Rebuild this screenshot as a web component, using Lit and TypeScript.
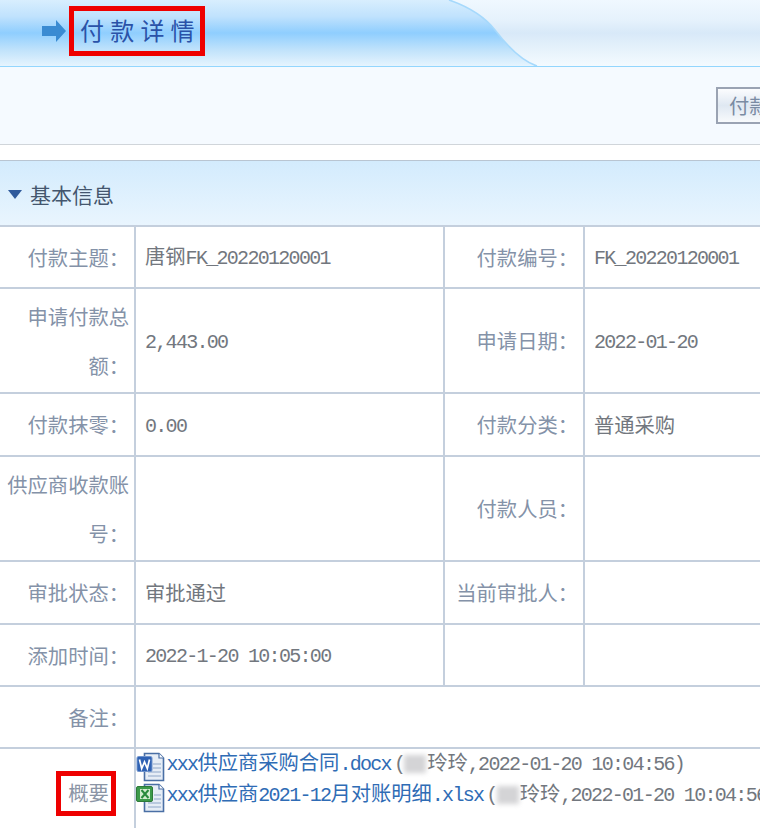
import { LitElement, html, css, svg } from "lit";
import { customElement } from "lit/decorators.js";

const t = (s: string) =>
  s.split(/([\x20-\x7e]+)/).map((p, i) => (i % 2 ? html`<span class="m">${p}</span>` : p));

const wordIcon = html`<svg class="ficon" width="29" height="30" viewBox="0 0 29 30">
  <path d="M8.5 1.5H23L27.5 6V28.5H8.5Z" fill="#e6edf6" stroke="#4a6fa5" stroke-width="1.6"/>
  <path d="M23 1.5V6H27.5" fill="#fff" stroke="#4a6fa5" stroke-width="1.2"/>
  <path d="M17 12H25M17 16H25M12 20H25M12 24H25" stroke="#8ea6c8" stroke-width="1"/>
  <rect x="1" y="4.5" width="15" height="15" rx="1.5" fill="#2f62b4" stroke="#6f93cc"/>
  <path d="M3.5 7.5L5.7 16.5L8.5 10L11.3 16.5L13.5 7.5" fill="none" stroke="#fff" stroke-width="1.7"/>
</svg>`;

const excelIcon = html`<svg class="ficon" width="29" height="30" viewBox="0 0 29 30">
  <path d="M8.5 1.5H23L27.5 6V28.5H8.5Z" fill="#e6edf6" stroke="#4a6fa5" stroke-width="1.6"/>
  <path d="M23 1.5V6H27.5" fill="#fff" stroke="#4a6fa5" stroke-width="1.2"/>
  <path d="M18 12H25M18 16H25M12 20H25M12 24H25" stroke="#8ea6c8" stroke-width="1"/>
  <rect x="0.5" y="3.5" width="16" height="15" rx="1.5" fill="#3c9a4a" stroke="#2d7a3a"/>
  <rect x="4" y="6" width="10" height="10" fill="#d5ecd0"/>
  <path d="M5.5 7L12.5 15M12.5 7L5.5 15" stroke="#2a8a3c" stroke-width="2"/>
</svg>`;

const curve = svg`
  <defs>
    <linearGradient id="hg" x1="0" y1="0" x2="0" y2="1">
      <stop offset="0" stop-color="#d8eefe"/>
      <stop offset="0.25" stop-color="#c0e2fd"/>
      <stop offset="0.5" stop-color="#8fcefe"/>
      <stop offset="0.75" stop-color="#bfe2fb"/>
      <stop offset="1" stop-color="#e6f4fe"/>
    </linearGradient>
  </defs>
  <path d="M0 0H449C475 9 488 21 495 30C508 47 522 61 537 66H0Z" fill="url(#hg)"/>
  <path d="M449 0C475 9 488 21 495 30C508 47 522 61 537 66" fill="none" stroke="#a6d9fc" stroke-width="1.6"/>`;

@customElement("app-root")
export class AppRoot extends LitElement {
  static styles = css`
    :host {
      display: block;
      width: 760px;
      height: 828px;
      overflow: hidden;
      background: #fff;
      font-family: "Noto Sans CJK SC", "Liberation Sans", sans-serif;
      font-size: 20.3px;
      font-weight: 400;
    }
    .m {
      font-family: "Liberation Mono", monospace;
      font-size: 20px;
      letter-spacing: -1.7px;
    }
    .header {
      position: relative;
      height: 66px;
      border-bottom: 1.5px solid #93d6fe;
      display: flex;
      align-items: center;
      background: linear-gradient(#f0f8ff, #e6f2fc 30%, #d8e9f8 50%, #e6f2fb 75%, #f4faff);
    }
    .curve { position: absolute; left: 0; top: 0; }
    .arrow { position: relative; margin-left: 42px; margin-right: 3px; margin-top: -4px; }
    .title {
      position: relative;
      box-sizing: border-box;
      width: 136px;
      height: 50px;
      border: 5px solid #ee0000;
      display: flex;
      align-items: center;
      padding-left: 6px;
      padding-bottom: 3px;
      margin-top: -4px;
      font-size: 24px;
      letter-spacing: 6.2px;
      color: #2a52a8;
      white-space: nowrap;
    }
    .toolbar {
      height: 78px;
      box-sizing: border-box;
      background: #f5faff;
      border-bottom: 1.5px solid #d0d5da;
      display: flex;
      justify-content: flex-end;
      padding-top: 20px;
    }
    .btn {
      box-sizing: border-box;
      width: 44px;
      height: 37px;
      border: 2px solid #9aa3b3;
      border-right: none;
      background: linear-gradient(#fbfcfe, #dfe8f2 50%, #f8fafc);
      color: #7a8ba3;
      padding-left: 11px;
      line-height: 33px;
      white-space: nowrap;
      overflow: hidden;
    }
    .spacer { height: 15px; }
    .section {
      height: 65px;
      box-sizing: border-box;
      border-top: 1.5px solid #b9c5d2;
      background: linear-gradient(#d3ebfd, #e9f5fe);
      display: flex;
      align-items: center;
      gap: 8px;
      padding: 2px 0 0 8px;
      font-size: 21px;
      color: #44566e;
    }
    table {
      border-collapse: collapse;
      table-layout: fixed;
      width: 800px;
    }
    td {
      border: 2px solid #c4cfdd;
      padding: 0;
      line-height: 49px;
      vertical-align: middle;
    }
    tr td:first-child { border-left: none; }
    .lab {
      text-align: right;
      padding-right: 5px;
      color: #8492a8;
    }
    .val {
      padding-left: 9px;
      color: #72777e;
      white-space: nowrap;
    }
    .rowA { height: 62px; }
    .rowC { height: 63px; }
    .rowB { height: 105px; }
    .box {
      display: inline-block;
      box-sizing: border-box;
      width: 60px;
      height: 45px;
      border: 5px solid #ee0000;
      padding-left: 5px;
      line-height: 33px;
      text-align: center;
      margin-right: 13px;
      margin-top: 22px;
      vertical-align: top;
      color: #8b95a5;
    }
    .att { height: 90px; }
    .att td { vertical-align: top; }
    .files {
      display: flex;
      flex-direction: column;
      line-height: 30px;
      margin-top: -2px;
      white-space: nowrap;
      color: #72777e;
    }
    .file { display: flex; align-items: center; height: 31px; }
    .ficon { flex: none; margin: 8px 2px 0 -0.5px; }
    a { color: #2f6cb5; text-decoration: none; }
    .open { margin-left: 3px; }
    .blur {
      display: inline-block;
      width: 22px;
      height: 18px;
      margin-right: 1px;
      background: #d4d4d6;
      filter: blur(2.5px);
      vertical-align: middle;
    }
  `;

  render() {
    return html`
      <div class="header">
        <svg class="curve" width="760" height="66" viewBox="0 0 760 66">${curve}</svg>
        <svg class="arrow" width="24" height="22" viewBox="0 0 24 22">
          <path d="M0 6H14V0L24 11L14 22V16H0Z" fill="#3a8bd2"/>
        </svg>
        <div class="title">付款详情</div>
      </div>
      <div class="toolbar"><div class="btn">付款</div></div>
      <div class="spacer"></div>
      <div class="section">
        <svg width="14" height="9" viewBox="0 0 14 9"><path d="M0 0H14L7 9Z" fill="#2f5a9c"/></svg>
        <span>基本信息</span>
      </div>
      <table>
        <colgroup>
          <col style="width:135px" /><col style="width:309px" /><col style="width:140px" /><col style="width:216px" />
        </colgroup>
        <tr class="rowA">
          <td class="lab">付款主题：</td><td class="val">${t("唐钢FK_20220120001")}</td>
          <td class="lab">付款编号：</td><td class="val">${t("FK_20220120001")}</td>
        </tr>
        <tr class="rowB">
          <td class="lab">申请付款总额：</td><td class="val">${t("2,443.00")}</td>
          <td class="lab">申请日期：</td><td class="val">${t("2022-01-20")}</td>
        </tr>
        <tr class="rowC">
          <td class="lab">付款抹零：</td><td class="val">${t("0.00")}</td>
          <td class="lab">付款分类：</td><td class="val">普通采购</td>
        </tr>
        <tr class="rowB">
          <td class="lab">供应商收款账号：</td><td class="val"></td>
          <td class="lab">付款人员：</td><td class="val"></td>
        </tr>
        <tr class="rowC">
          <td class="lab">审批状态：</td><td class="val">审批通过</td>
          <td class="lab">当前审批人：</td><td class="val"></td>
        </tr>
        <tr class="rowA">
          <td class="lab">添加时间：</td><td class="val">${t("2022-1-20 10:05:00")}</td>
          <td class="lab"></td><td class="val"></td>
        </tr>
        <tr class="rowA">
          <td class="lab">备注：</td><td class="val" colspan="3"></td>
        </tr>
        <tr class="att">
          <td class="lab"><span class="box">概要</span></td>
          <td colspan="3">
            <div class="files">
              <div class="file">
                ${wordIcon}<a href="#">${t("xxx供应商采购合同.docx")}</a
                ><span class="open">${t("(")}<span class="blur"></span>玲玲${t(",2022-01-20 10:04:56)")}</span>
              </div>
              <div class="file">
                ${excelIcon}<a href="#">${t("xxx供应商2021-12月对账明细.xlsx")}</a
                ><span class="open">${t("(")}<span class="blur"></span>玲玲${t(",2022-01-20 10:04:56)")}</span>
              </div>
            </div>
          </td>
        </tr>
      </table>
    `;
  }
}
